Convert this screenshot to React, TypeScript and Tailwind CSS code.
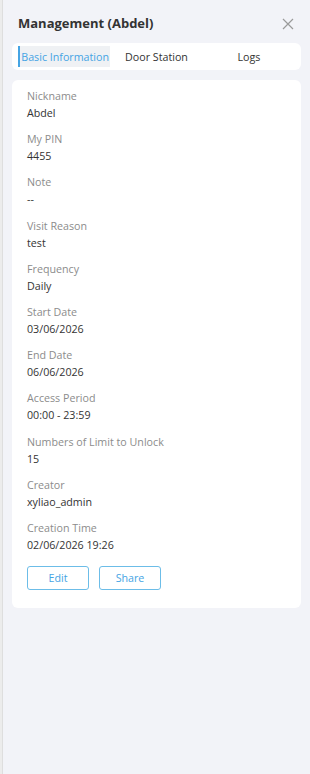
import React from "react";

const fields: [string, string][] = [
  ["Nickname", "Abdel"],
  ["My PIN", "4455"],
  ["Note", "--"],
  ["Visit Reason", "test"],
  ["Frequency", "Daily"],
  ["Start Date", "03/06/2026"],
  ["End Date", "06/06/2026"],
  ["Access Period", "00:00 - 23:59"],
  ["Numbers of Limit to Unlock", "15"],
  ["Creator", "xyliao_admin"],
  ["Creation Time", "02/06/2026 19:26"],
];

export default function App() {
  return (
    <div
      className="flex w-[310px] h-[774px] bg-[#f2f3f8] overflow-hidden"
      style={{ fontFamily: '"Open Sans", "Noto Sans", sans-serif' }}
    >
      <div className="w-[3px] shrink-0 bg-[#ececec] border-r border-[#dedede]" />
      <div className="flex-1 flex flex-col">
        <div className="h-[43px] flex items-center justify-between pl-[15px] pr-[16px] pt-[4px]">
          <span className="text-[13px] font-bold text-[#333]">Management (Abdel)</span>
          <svg width="12" height="12" viewBox="0 0 12 12">
            <path d="M1 1L11 11M11 1L1 11" stroke="#9a9a9a" strokeWidth="1.2" />
          </svg>
        </div>
        <div className="mx-[9px] bg-white rounded-[6px] h-[27px] px-[6px] py-[3px] grid grid-cols-3 text-[10.7px] whitespace-nowrap">
          <div className="flex items-center justify-center bg-[#eff1f4] border-l-2 border-[#45a4e4] text-[#45a4e4] pt-[1px]">
            Basic Information
          </div>
          <div className="flex items-center justify-center text-[#333] pt-[1px]">Door Station</div>
          <div className="flex items-center justify-center text-[#333] pt-[1px]">Logs</div>
        </div>
        <div className="mx-[9px] mt-[10px] bg-white rounded-[6px] pl-[15px] pt-[8px] pb-[18px]">
          <div className="flex flex-col gap-[9.2px]">
            {fields.map(([l, v]) => (
              <div key={l} className="flex flex-col text-[10.7px] leading-[17px]">
                <span className="text-[#8c8c8c]">{l}</span>
                <span className="text-[#333]">{v}</span>
              </div>
            ))}
          </div>
          <div className="flex gap-[10px] mt-[12px]">
            <button className="w-[62px] h-[24px] border border-[#6cbde8] rounded-[3px] text-[10.7px] text-[#45a4e4] bg-white">
              Edit
            </button>
            <button className="w-[62px] h-[24px] border border-[#6cbde8] rounded-[3px] text-[10.7px] text-[#45a4e4] bg-white">
              Share
            </button>
          </div>
        </div>
      </div>
    </div>
  );
}
